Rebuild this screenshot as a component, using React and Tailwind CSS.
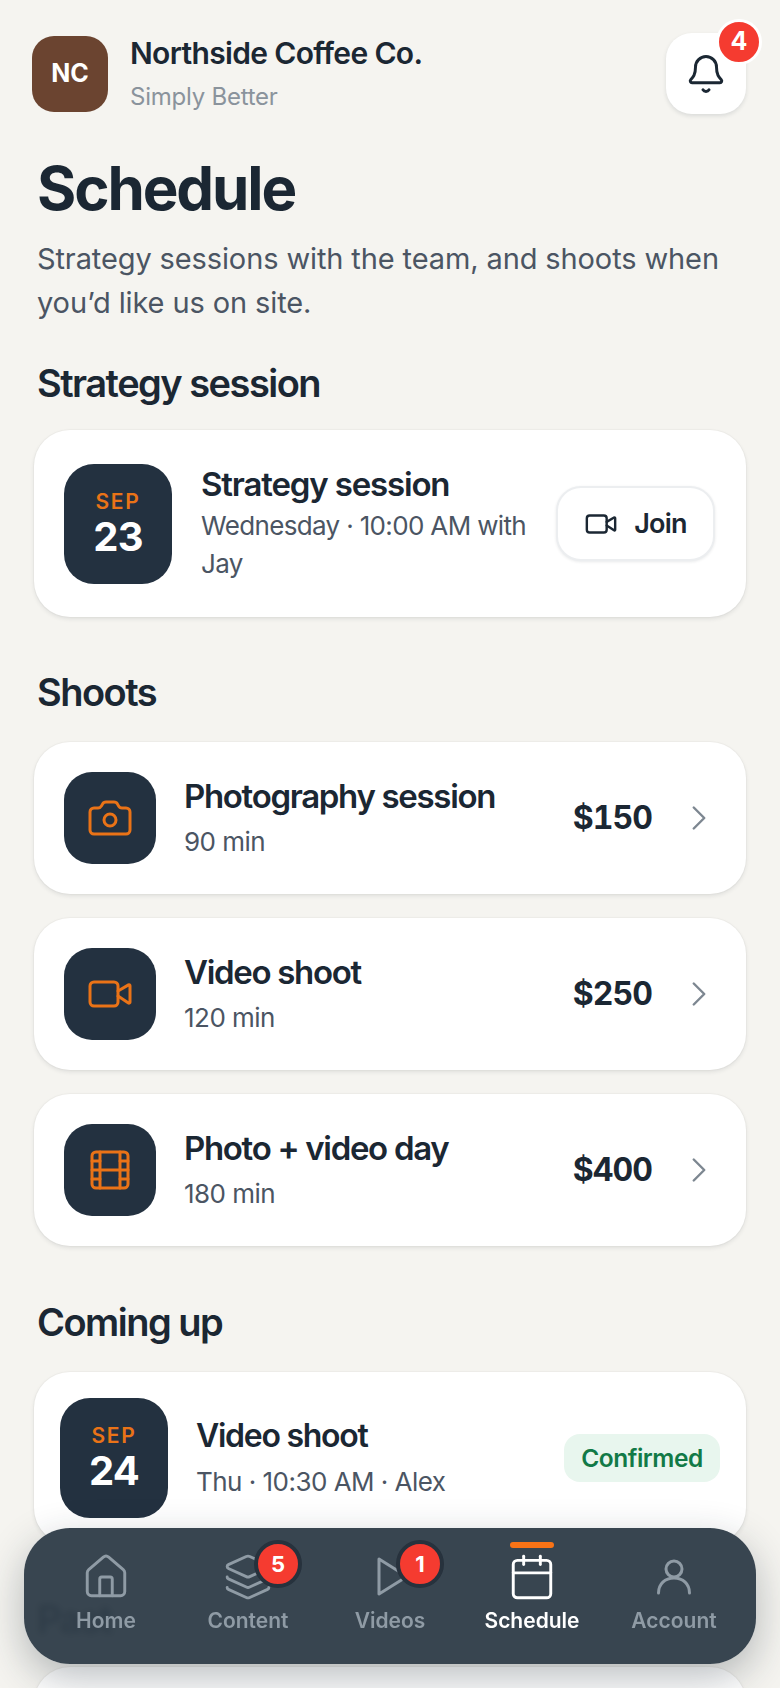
import React from 'react';
import { Bell, Video, Camera, Film, ChevronRight, House, Layers, Calendar } from 'lucide-react';

const SHOOTS = [
  { name: 'Photography session', length: '90 min', price: '$150', Icon: Camera },
  { name: 'Video shoot', length: '120 min', price: '$250', Icon: Video },
  { name: 'Photo + video day', length: '180 min', price: '$400', Icon: Film },
];

const PlayOutline = ({ className }) => (
  <svg viewBox="0 0 50 50" fill="none" stroke="currentColor" strokeWidth="3" strokeLinejoin="round" className={className}>
    <path d="M14 7 L42 24.5 L14 42 Z" />
  </svg>
);

const Person = ({ className }) => (
  <svg viewBox="0 0 50 50" fill="none" stroke="currentColor" strokeWidth="3" strokeLinecap="round" className={className}>
    <circle cx="25" cy="17" r="8" />
    <path d="M9.5 41 C9.5 32 16 26 25 26 C34 26 40.5 32 40.5 41" />
  </svg>
);

const NAV = [
  { label: 'Home', Icon: House },
  { label: 'Content', Icon: Layers, badge: '5' },
  { label: 'Videos', Icon: PlayOutline, badge: '1' },
  { label: 'Schedule', Icon: Calendar, active: true },
  { label: 'Account', Icon: Person },
];

const DateTile = ({ month, day }) => (
  <div className="flex h-[120px] w-[108px] shrink-0 flex-col items-center justify-center rounded-[30px] bg-[#233140]">
    <span className="text-[21px] leading-[26px] font-semibold tracking-[0.08em] text-[#ea7317]">{month}</span>
    <span className="text-[40px] leading-[44px] font-bold tracking-[-0.02em] text-white">{day}</span>
  </div>
);

const SectionTitle = ({ children, className }) => (
  <h2 className={`text-[38px] leading-[44px] font-semibold tracking-[-0.04em] text-[#1b2733] ${className}`}>{children}</h2>
);

const cardClass = 'mx-[34px] rounded-[36px] bg-white shadow-[0_2px_4px_rgba(27,39,51,0.1),0_0_0_1px_rgba(27,39,51,0.025)]';

export default function App() {
  return (
    <div className="relative h-[1688px] w-[780px] overflow-hidden bg-[#f5f4f0] font-['Inter',sans-serif] text-[#1b2733]">
      {/* Header */}
      <header className="flex items-start justify-between pt-[33px] pr-[34px] pl-[32px]">
        <div className="flex items-start gap-[22px] pt-[3px]">
          <div className="flex h-[76px] w-[76px] items-center justify-center rounded-[22px] bg-[#6b4430] text-[25px] font-bold text-white">NC</div>
          <div>
            <p className="text-[30px] leading-[34px] font-semibold tracking-[-0.022em]">Northside Coffee Co.</p>
            <p className="mt-[12px] text-[24px] leading-[30px] tracking-[-0.01em] text-[#8a939c]">Simply Better</p>
          </div>
        </div>
        <div className="relative flex h-[81px] w-[80px] items-center justify-center rounded-[26px] bg-white shadow-[0_2px_4px_rgba(27,39,51,0.12)]">
          <Bell className="h-[42px] w-[42px]" strokeWidth={1.7} />
          <span className="absolute top-[-14px] right-[-16px] flex h-[46px] w-[46px] items-center justify-center rounded-full border-[3px] border-white bg-[#f53b30] text-[25px] font-bold text-white">4</span>
        </div>
      </header>

      {/* Page title */}
      <div className="px-[37px]">
        <h1 className="mt-[40px] text-[60px] leading-[68px] font-bold tracking-[-0.035em]">Schedule</h1>
        <p className="mt-[15px] text-[29px] leading-[44px] tracking-[-0.004em] text-[#4b5563]">Strategy sessions with the team, and shoots when you’d like us on site.</p>
      </div>

      <SectionTitle className="mt-[36px] px-[37px]">Strategy session</SectionTitle>
      <section className={`${cardClass} mt-[25px] flex h-[187px] items-center pr-[31px] pl-[30px]`}>
        <DateTile month="SEP" day="23" />
        <div className="ml-[29px] min-w-0 flex-1">
          <p className="text-[33px] leading-[40px] font-semibold tracking-[-0.035em]">Strategy session</p>
          <p className="mt-[3px] text-[26px] leading-[38px] tracking-[-0.025em] text-[#4b5563]">Wednesday · 10:00 AM with Jay</p>
        </div>
        <div className="ml-[20px] flex h-[75px] w-[159px] shrink-0 items-center justify-center gap-[16px] rounded-[25px] border-2 border-[#eceef0] bg-white shadow-[0_1px_3px_rgba(27,39,51,0.1)]">
          <Video className="h-[34px] w-[34px]" strokeWidth={1.7} />
          <span className="pt-[2px] text-[27px] font-semibold tracking-[-0.03em]">Join</span>
        </div>
      </section>

      <SectionTitle className="mt-[53px] px-[37px]">Shoots</SectionTitle>
      <div className="mt-[28px] flex flex-col gap-[24px]">
        {SHOOTS.map(({ name, length, price, Icon }) => (
          <section key={name} className={`${cardClass} flex h-[152px] items-center pr-[26px] pl-[30px]`}>
            <div className="flex h-[92px] w-[92px] shrink-0 items-center justify-center rounded-[28px] bg-[#233140]">
              <Icon className="h-[48px] w-[48px] text-[#ea7317]" strokeWidth={1.5} />
            </div>
            <div className="ml-[28px] flex-1">
              <p className="text-[33px] leading-[38px] font-semibold tracking-[-0.04em]">{name}</p>
              <p className="mt-[9px] text-[26px] leading-[36px] tracking-[-0.02em] text-[#4b5563]">{length}</p>
            </div>
            <span className="text-[32px] font-bold tracking-[-0.03em] tabular-nums">{price}</span>
            <ChevronRight className="ml-[26px] h-[42px] w-[42px] text-[#7d8791]" strokeWidth={1.4} />
          </section>
        ))}
      </div>

      <SectionTitle className="mt-[54px] px-[37px]">Coming up</SectionTitle>
      <section className={`${cardClass} mt-[28px] flex h-[172px] items-center pr-[26px] pl-[26px]`}>
        <DateTile month="SEP" day="24" />
        <div className="ml-[28px] flex-1">
          <p className="text-[32px] leading-[38px] font-semibold tracking-[-0.04em]">Video shoot</p>
          <p className="mt-[9px] text-[26px] leading-[36px] tracking-[-0.02em] text-[#4b5563]">Thu · 10:30 AM · Alex</p>
        </div>
        <span className="flex h-[48px] w-[156px] items-center justify-center rounded-[16px] bg-[#e8f6ee] text-[24.5px] font-semibold tracking-[-0.02em] text-[#127a47]">Confirmed</span>
      </section>

      <SectionTitle className="mt-[53px] px-[37px]">Past</SectionTitle>
      <section className={`${cardClass} mt-[26px] h-[160px]`} />

      {/* Bottom tab bar */}
      <nav className="absolute top-[1528px] left-[24px] grid h-[136px] w-[732px] grid-cols-5 rounded-[46px] bg-[#303d49]/96 px-[11px] shadow-[0_14px_40px_rgba(27,39,51,0.3)] backdrop-blur-[3px]">
        {NAV.map(({ label, Icon, badge, active }) => (
          <div key={label} className={`relative flex flex-col items-center pt-[24px] ${active ? 'text-white' : 'text-[#8f9ba5]'}`}>
            {active && <span className="absolute top-[14px] h-[6px] w-[44px] rounded-full bg-[#f97316]" />}
            <div className="relative h-[50px] w-[50px]">
              <Icon className="h-[50px] w-[50px]" strokeWidth={1.4} />
              {badge && (
                <span className="absolute top-[-12px] left-[31px] box-content flex h-[40px] w-[40px] items-center justify-center rounded-full border-[4px] border-[#27323d] bg-[#f53b30] text-[22px] font-bold text-white">{badge}</span>
              )}
            </div>
            <span className="mt-[6px] text-[21px] leading-[26px] font-semibold">{label}</span>
          </div>
        ))}
      </nav>
    </div>
  );
}
